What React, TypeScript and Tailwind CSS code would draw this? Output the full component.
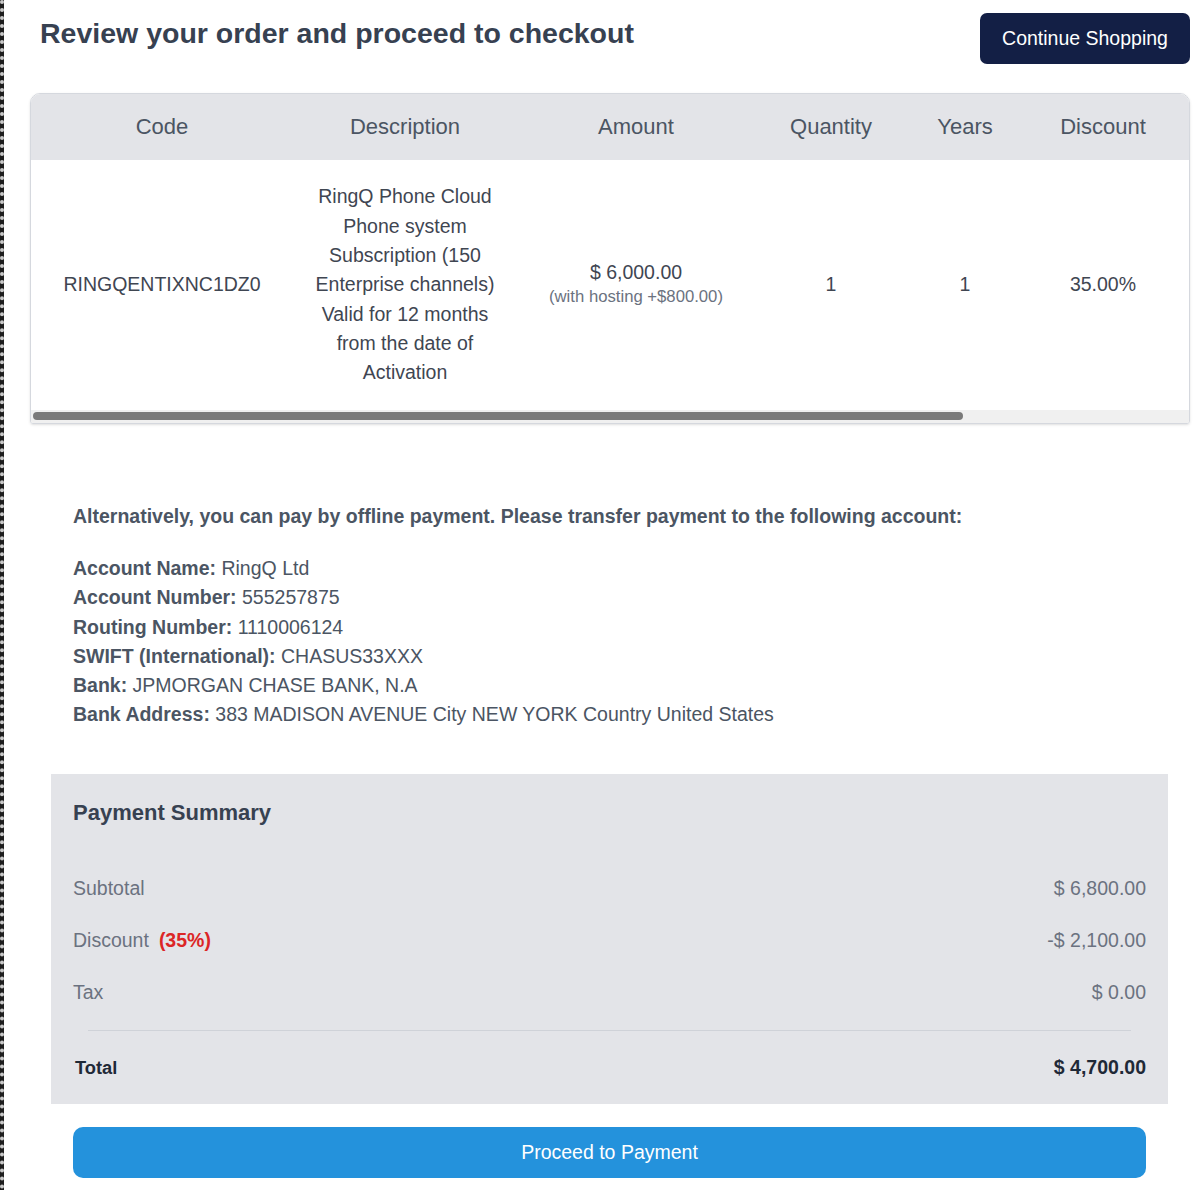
import React from "react";

const columns = [
  { key: "code", label: "Code", width: 262 },
  { key: "description", label: "Description", width: 224 },
  { key: "amount", label: "Amount", width: 238 },
  { key: "quantity", label: "Quantity", width: 152 },
  { key: "years", label: "Years", width: 116 },
  { key: "discount", label: "Discount", width: 160 },
];

// the table is wider than its box; the rest is out of view behind the scrollbar
const HIDDEN_WIDTH = 290;

const bankDetails = [
  { label: "Account Name:", value: "RingQ Ltd" },
  { label: "Account Number:", value: "555257875" },
  { label: "Routing Number:", value: "1110006124" },
  { label: "SWIFT (International):", value: "CHASUS33XXX" },
  { label: "Bank:", value: "JPMORGAN CHASE BANK, N.A" },
  { label: "Bank Address:", value: "383 MADISON AVENUE City NEW YORK Country United States" },
];

function SummaryRow({ label, value, extra }: { label: string; value: string; extra?: string }) {
  return (
    <div className="flex h-[52px] items-center justify-between text-[19.5px] text-[#6b7280]">
      <span>
        {label}
        {extra ? <span className="ml-[10px] font-bold text-[#dc2626]">{extra}</span> : null}
      </span>
      <span>{value}</span>
    </div>
  );
}

export default function App() {
  return (
    <div
      className="flex min-h-[1190px] w-full bg-white"
      style={{ fontFamily: '"Liberation Sans", Arial, sans-serif' }}
    >
      <div className="w-1 shrink-0 border-l-4 border-dotted border-[#c9c9c9] bg-[#1d1d1d]" />

      <div className="min-w-0 flex-1 pl-[26px] pr-[10px]">
        {/* header */}
        <div className="flex items-start justify-between pt-[13px]">
          <h1 className="ml-[10px] text-[28.5px] font-bold leading-[40px] text-[#374151]">
            Review your order and proceed to checkout
          </h1>
          <button
            type="button"
            className="h-[51px] w-[210px] rounded-[7px] bg-[#131f45] text-[19.5px] text-white"
          >
            Continue Shopping
          </button>
        </div>

        {/* order table */}
        <div className="mt-[29px] overflow-hidden rounded-t-[10px] rounded-b-[3px] border border-[#d5d8de] shadow-sm">
          <div className="overflow-hidden">
            <table className="table-fixed border-collapse" style={{ width: 1152 + HIDDEN_WIDTH }}>
              <colgroup>
                {columns.map((c) => (
                  <col key={c.key} style={{ width: c.width }} />
                ))}
                <col style={{ width: HIDDEN_WIDTH }} />
              </colgroup>
              <thead>
                <tr className="h-[66px] bg-[#e3e4e8]">
                  {columns.map((c) => (
                    <th key={c.key} className="pb-[2px] text-center text-[22px] font-normal text-[#4b5563]">
                      {c.label}
                    </th>
                  ))}
                  <th />
                </tr>
              </thead>
              <tbody>
                <tr className="h-[250px] text-center align-middle text-[19.5px] text-[#3f4652]">
                  <td>RINGQENTIXNC1DZ0</td>
                  <td className="px-[19px] leading-[29.3px]">
                    RingQ Phone Cloud Phone system Subscription (150 Enterprise channels) Valid for 12 months from the date of Activation
                  </td>
                  <td>
                    <div className="leading-[24px]">$ 6,000.00</div>
                    <div className="text-[16.7px] leading-[26px] text-[#6b7280]">(with hosting +$800.00)</div>
                  </td>
                  <td>1</td>
                  <td>1</td>
                  <td>35.00%</td>
                  <td />
                </tr>
              </tbody>
            </table>
          </div>
          <div className="h-[13px] bg-[#f0f0f0] pt-[2px] pl-[2px]">
            <div className="h-[8px] w-[930px] rounded-full bg-[#7a7a7a]" />
          </div>
        </div>

        <div className="ml-[21px] mr-[22px]">
          {/* offline payment */}
          <div className="mt-[78px] px-[22px] text-[#4b5563]">
            <p className="text-[19.5px] font-bold leading-[29px]">
              Alternatively, you can pay by offline payment. Please transfer payment to the following account:
            </p>
            <div className="mt-[23px] text-[19.5px] leading-[29.3px]">
              {bankDetails.map((d) => (
                <div key={d.label}>
                  <span className="font-bold">{d.label}</span> {d.value}
                </div>
              ))}
            </div>
          </div>

          {/* payment summary */}
          <div className="mt-[44px] bg-[#e3e4e8] px-[22px] pt-[22px] pb-[10px]">
            <h2 className="text-[22px] font-bold leading-[33px] text-[#374151]">Payment Summary</h2>
            <div className="mt-[34px]">
              <SummaryRow label="Subtotal" value="$ 6,800.00" />
              <SummaryRow label="Discount" extra="(35%)" value="-$ 2,100.00" />
              <SummaryRow label="Tax" value="$ 0.00" />
            </div>
            <div className="mx-[15px] mt-[11px] h-px bg-[#cfd2d8]" />
            <div className="mt-[11px] flex h-[52px] items-center justify-between font-bold text-[#1f2937]">
              <span className="pl-[2px] text-[18.3px]">Total</span>
              <span className="text-[19.5px]">$ 4,700.00</span>
            </div>
          </div>

          <div className="mt-[23px] px-[22px]">
            <button
              type="button"
              className="h-[51px] w-full rounded-[10px] bg-[#2492dc] text-[19.5px] text-white"
            >
              Proceed to Payment
            </button>
          </div>
        </div>
      </div>
    </div>
  );
}
